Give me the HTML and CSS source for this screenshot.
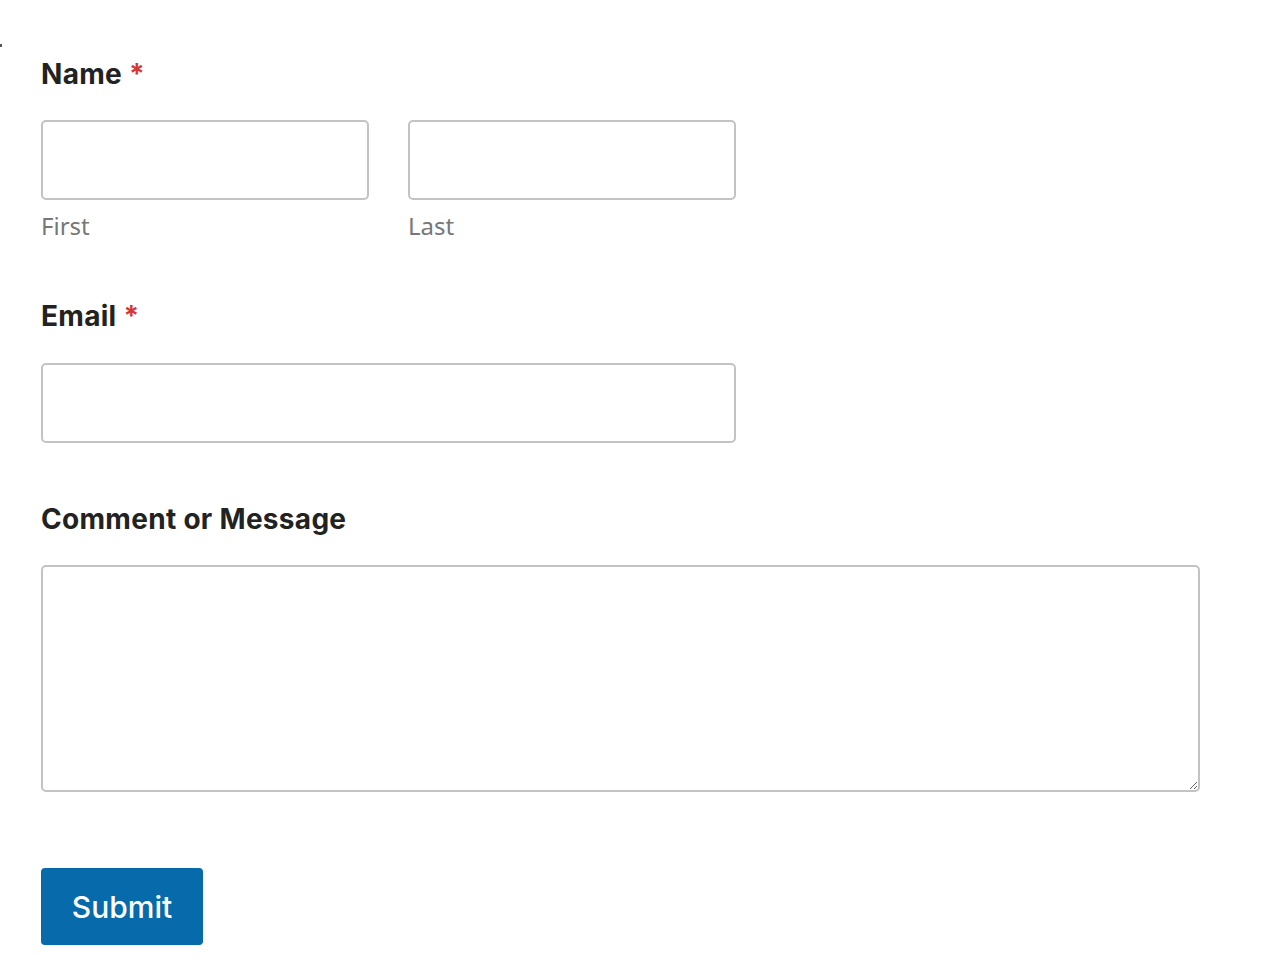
FILE: index.html
```html
<!DOCTYPE html>
<html lang="en">
<head>
  <meta charset="UTF-8">
  <meta name="viewport" content="width=device-width, initial-scale=1.0">
  <title>Contact</title>
  <link rel="stylesheet" href="styles.css">
</head>
<body>
  <span class="dot"></span>
  <form class="form">
    <fieldset class="field">
      <legend class="label">Name <span class="req">*</span></legend>
      <div class="row">
        <div class="sub">
          <input type="text" id="first">
          <label for="first" class="sublabel">First</label>
        </div>
        <div class="sub">
          <input type="text" id="last">
          <label for="last" class="sublabel">Last</label>
        </div>
      </div>
    </fieldset>

    <div class="field email">
      <label for="email" class="label">Email <span class="req">*</span></label>
      <input type="email" id="email" class="wide">
    </div>

    <div class="field">
      <label for="msg" class="label">Comment or Message</label>
      <textarea id="msg"></textarea>
    </div>

    <button type="submit" class="btn">Submit</button>
  </form>
</body>
</html>
```

FILE: styles.css
```css
body {
  margin: 0;
  background: #fff;
  color: #222;
  font-family: "Inter", "Lato", sans-serif;
}
.dot {
  position: absolute;
  left: 0;
  top: 44px;
  width: 2px;
  height: 3px;
  background: #555;
}
.form {
  padding: 54px 0 0 41px;
  width: 1159px;
}
.field {
  border: none;
  margin: 0;
  padding: 0;
}
.label {
  display: block;
  padding: 0;
  font-size: 28px;
  font-weight: 700;
  line-height: 40px;
  margin-bottom: 26px;
  letter-spacing: 0.3px;
}
.req {
  color: #d63637;
}
.row {
  display: flex;
  gap: 39px;
}
.sub {
  width: 328px;
}
input, textarea {
  box-sizing: border-box;
  display: block;
  width: 100%;
  height: 80px;
  border: 2px solid #c3c3c3;
  border-radius: 5px;
  margin: 0;
  font-size: 24px;
}
.sublabel {
  display: block;
  margin-top: 9px;
  font-family: "Noto Sans", sans-serif;
  font-size: 24px;
  line-height: 34px;
  color: #777;
}
fieldset.field {
  margin-bottom: 53px;
}
.email .label {
  margin-bottom: 27px;
}
.email {
  margin-bottom: 56px;
}
.wide {
  width: 695px;
}
textarea {
  height: 227px;
  resize: vertical;
}
.btn {
  display: block;
  margin-top: 76px;
  width: 162px;
  height: 77px;
  border: none;
  border-radius: 4px;
  background: #066aab;
  color: #fff;
  font-family: "Inter", sans-serif;
  font-size: 30px;
  font-weight: 500;
}
```
